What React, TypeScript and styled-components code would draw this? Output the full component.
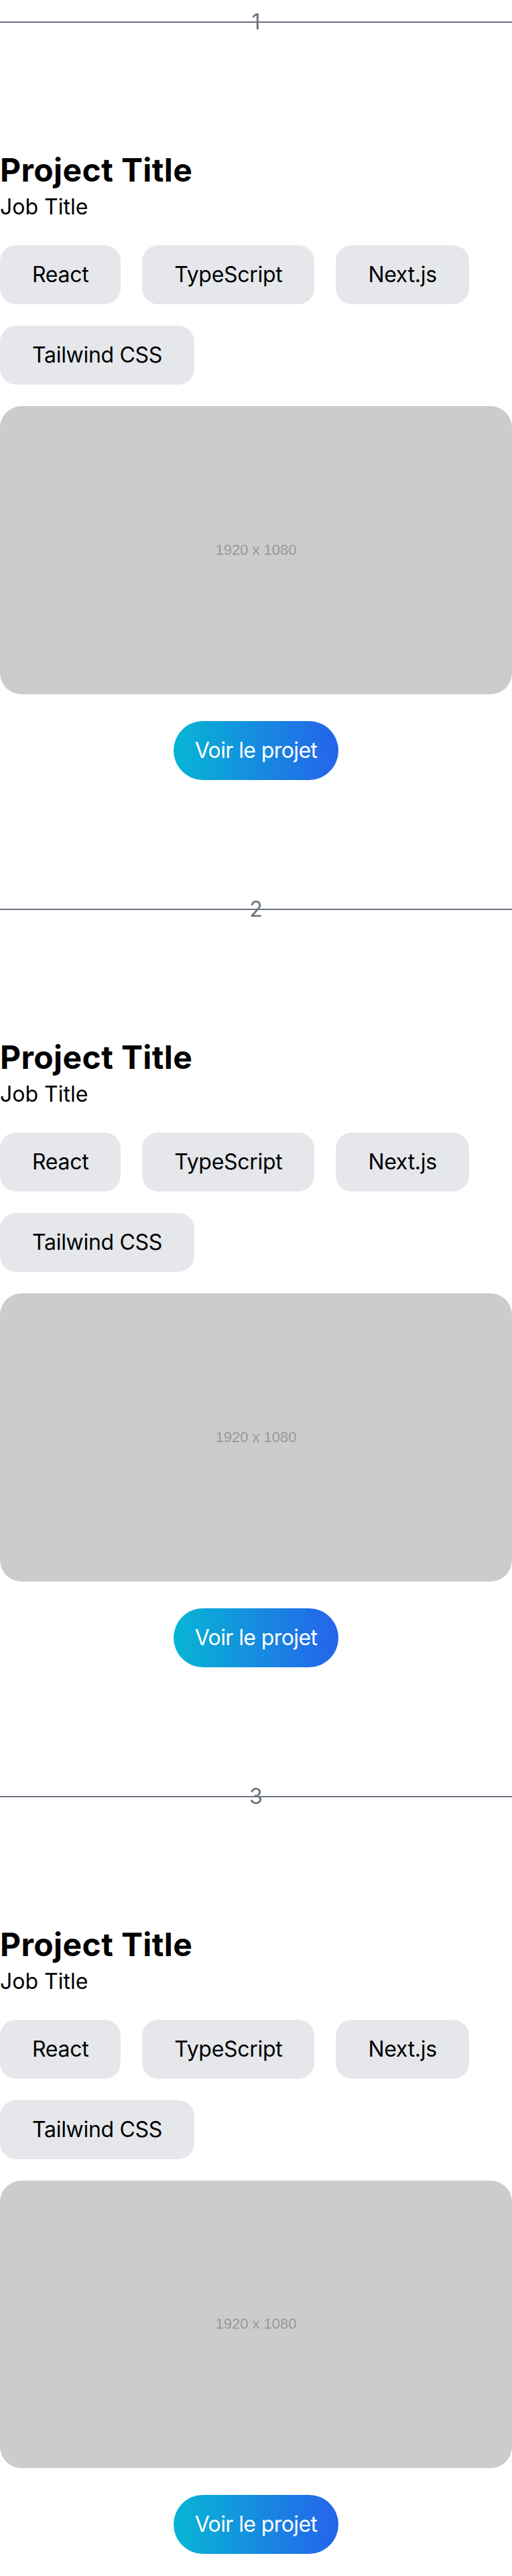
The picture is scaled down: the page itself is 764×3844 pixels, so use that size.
import React from 'react';
import styled, { createGlobalStyle } from 'styled-components';

const GlobalStyle = createGlobalStyle`
  html, body {
    margin: 0;
    padding: 0;
    background: #ffffff;
  }
  body {
    font-family: Inter, "Noto Sans", "Liberation Sans", sans-serif;
    color: #000000;
  }
  * {
    box-sizing: border-box;
  }
`;

type Project = {
  id: number;
  title: string;
  job: string;
  stack: string[];
};

const projects: Project[] = [1, 2, 3].map((id) => ({
  id,
  title: 'Project Title',
  job: 'Job Title',
  stack: ['React', 'TypeScript', 'Next.js', 'Tailwind CSS'],
}));

const App: React.FC = () => {
  return (
    <>
      <GlobalStyle />
      <Page>
        {projects.map((project) => (
          <ProjectBlock key={project.id}>
            <Divider>
              <DividerLine />
              <DividerNumber>{project.id}</DividerNumber>
            </Divider>
            <ProjectCard>
              <Title>{project.title}</Title>
              <JobTitle>{project.job}</JobTitle>
              <StackList>
                {project.stack.map((tech) => (
                  <StackChip key={tech}>{tech}</StackChip>
                ))}
              </StackList>
              <Preview>
                <PreviewLabel>1920 x 1080</PreviewLabel>
              </Preview>
              <ViewButton type="button">Voir le projet</ViewButton>
            </ProjectCard>
          </ProjectBlock>
        ))}
      </Page>
    </>
  );
};

export default App;

const Page = styled.main`
  display: flex;
  flex-direction: column;
  width: 100%;
`;

const ProjectBlock = styled.section`
  display: flex;
  flex-direction: column;
`;

const Divider = styled.div`
  display: grid;
  place-items: center;
  height: 66px;
  > * {
    grid-area: 1 / 1;
  }
`;

const DividerLine = styled.div`
  width: 100%;
  height: 2px;
  background: #6b7280;
`;

const DividerNumber = styled.span`
  font-size: 32px;
  line-height: 40px;
  color: #6b7280;
`;

const ProjectCard = styled.article`
  display: flex;
  flex-direction: column;
  padding: 160px 0;
`;

const Title = styled.h2`
  margin: 0;
  font-size: 48px;
  line-height: 56px;
  font-weight: 700;
  letter-spacing: 0.4px;
  color: #000000;
`;

const JobTitle = styled.p`
  margin: 7px 0 0;
  font-size: 32px;
  line-height: 40px;
  font-weight: 400;
  color: #000000;
`;

const StackList = styled.ul`
  display: flex;
  flex-wrap: wrap;
  gap: 32px;
  margin: 37px 0 0;
  padding: 0;
  list-style: none;
`;

const StackChip = styled.li`
  padding: 24px 48px;
  border-radius: 24px;
  background: #e5e7eb;
  font-size: 32px;
  line-height: 40px;
  letter-spacing: -0.3px;
  color: #000000;
`;

const Preview = styled.div`
  display: flex;
  align-items: center;
  justify-content: center;
  width: 100%;
  aspect-ratio: 16 / 9;
  margin-top: 32px;
  border-radius: 32px;
  background: #cccccc;
`;

const PreviewLabel = styled.span`
  font-family: "Liberation Sans", Arial, sans-serif;
  font-size: 22px;
  color: #999999;
`;

const ViewButton = styled.button`
  align-self: center;
  margin-top: 40px;
  padding: 24px 32px;
  border: none;
  border-radius: 9999px;
  background: linear-gradient(to right, #06b6d4, #2563eb);
  font-family: Inter, "Noto Sans", sans-serif;
  font-size: 32px;
  line-height: 40px;
  letter-spacing: -0.6px;
  color: #ffffff;
  cursor: pointer;
`;
